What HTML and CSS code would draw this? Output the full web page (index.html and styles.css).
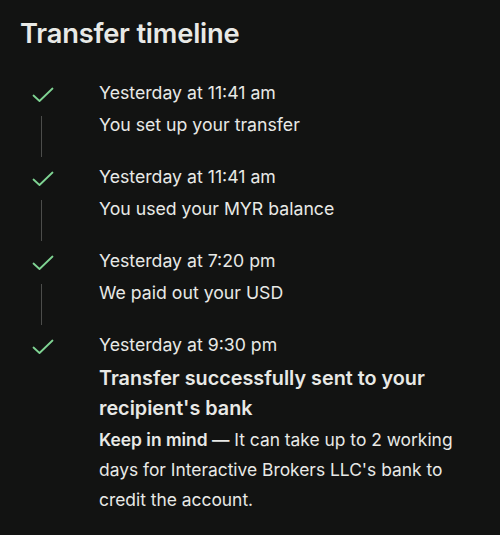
FILE: index.html
```html
<!DOCTYPE html>
<html>
<head>
    <title>Transfer timeline</title>
    <link rel="stylesheet" href="styles.css">
</head>
<body>
    <div class="timeline">
        <h1 class="timeline-title">Transfer timeline</h1>

        <div class="step">
            <div class="step-marker">
                <svg class="check" viewBox="0 0 22 16"><path d="M1.5 8.5 L7.5 14 L20.5 1.5"/></svg>
                <div class="connector"></div>
            </div>
            <div class="step-body">
                <div class="step-time">Yesterday at 11:41 am</div>
                <div class="step-text">You set up your transfer</div>
            </div>
        </div>

        <div class="step">
            <div class="step-marker">
                <svg class="check" viewBox="0 0 22 16"><path d="M1.5 8.5 L7.5 14 L20.5 1.5"/></svg>
                <div class="connector"></div>
            </div>
            <div class="step-body">
                <div class="step-time">Yesterday at 11:41 am</div>
                <div class="step-text">You used your MYR balance</div>
            </div>
        </div>

        <div class="step">
            <div class="step-marker">
                <svg class="check" viewBox="0 0 22 16"><path d="M1.5 8.5 L7.5 14 L20.5 1.5"/></svg>
                <div class="connector"></div>
            </div>
            <div class="step-body">
                <div class="step-time">Yesterday at 7:20 pm</div>
                <div class="step-text">We paid out your USD</div>
            </div>
        </div>

        <div class="step last">
            <div class="step-marker">
                <svg class="check" viewBox="0 0 22 16"><path d="M1.5 8.5 L7.5 14 L20.5 1.5"/></svg>
            </div>
            <div class="step-body">
                <div class="step-time">Yesterday at 9:30 pm</div>
                <div class="step-heading">Transfer successfully sent to your recipient's bank</div>
                <p class="step-note"><b>Keep in mind —</b> It can take up to 2 working days for Interactive Brokers LLC's bank to credit the account.</p>
            </div>
        </div>
    </div>
</body>
</html>
```

FILE: styles.css
```css
html, body {
    margin: 0;
    background-color: #121312;
}
body {
    font-family: Inter, "Noto Sans", sans-serif;
    color: #e8e9e6;
}
.timeline {
    padding: 16px 22px 0 20px;
}
.timeline-title {
    font-size: 27.3px;
    font-weight: 600;
    line-height: 36px;
    margin: 0 0 25px 0;
    letter-spacing: -0.2px;
}
.step {
    display: flex;
    padding-bottom: 20px;
}
.step-marker {
    width: 79px;
    flex-shrink: 0;
    display: flex;
    flex-direction: column;
    padding-left: 12px;
    box-sizing: border-box;
}
.check {
    width: 22px;
    height: 16px;
    margin-top: 10px;
    fill: none;
    stroke: #7fd493;
    stroke-width: 1.8;
    stroke-linecap: round;
    stroke-linejoin: round;
}
.connector {
    width: 1px;
    flex: 1;
    margin: 13px 0 -16px 9px;
    background-color: #4c4d4b;
}
.step-body {
    flex: 1;
    padding-right: 8px;
}
.step-time,
.step-text {
    font-size: 17.7px;
    line-height: 32px;
}
.step-heading {
    font-size: 19.8px;
    font-weight: 600;
    line-height: 30px;
    margin-top: 2px;
    max-width: 340px;
}
.step-note {
    font-size: 17.4px;
    line-height: 30px;
    margin: 2px 0 0 0;
    max-width: 362px;
}
.step-note b {
    font-weight: 600;
}
```
